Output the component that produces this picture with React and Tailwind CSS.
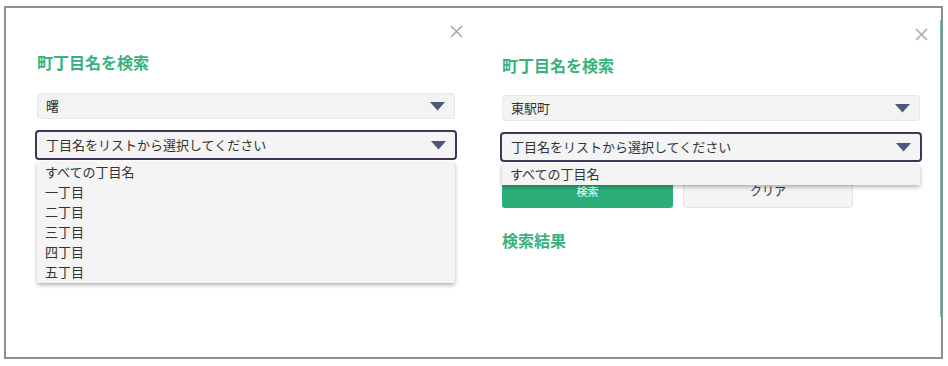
import React from "react";

const font = { fontFamily: '"Noto Sans CJK JP", "Noto Sans", sans-serif' };

function CloseX() {
  return (
    <svg width="13" height="13" viewBox="0 0 13 13" className="block">
      <path d="M1 1 L12 12 M12 1 L1 12" stroke="#a9a9a9" strokeWidth="1.6" fill="none" />
    </svg>
  );
}

function Arrow() {
  return (
    <svg width="15" height="9" viewBox="0 0 15 9" className="block shrink-0">
      <path d="M0 0 L15 0 L7.5 8.5 Z" fill="#4c577b" />
    </svg>
  );
}

function Panel({ town, items, topPad, headGap, selGap, showBelow }) {
  return (
    <div className="flex flex-col w-[418px]">
      <div className={`flex justify-end -mr-[8px] ${topPad}`}>
        <CloseX />
      </div>
      <div className={`${headGap} text-[16px] leading-[24px] font-bold text-[#37b27c]`}>町丁目名を検索</div>
      <div className={`${selGap} h-[26px] flex items-center justify-between pl-[8px] pr-[9px] bg-[#f3f3f3] border border-[#e7e7e7] rounded-[3px] text-[13px] text-[#333]`}>
        <span>{town}</span>
        <Arrow />
      </div>
      <div className="relative mt-[11px] -mx-[2px]">
        <div className="h-[30px] flex items-center justify-between pl-[9px] pr-[9px] bg-[#f4f4f4] border-2 border-[#3e3659] rounded-[4px] text-[13px] text-[#333]">
          <span>丁目名をリストから選択してください</span>
          <Arrow />
        </div>
        <div className="absolute left-[2px] right-[2px] top-full mt-[2px] z-10 bg-[#f4f4f4] shadow-[0_2px_4px_rgba(0,0,0,0.3)] pb-[1px]">
          {items.map((t) => (
            <div key={t} className="h-[20px] leading-[20px] pl-[8px] text-[13px] text-[#333]">{t}</div>
          ))}
        </div>
      </div>
      {showBelow && (
        <>
          <div className="mt-[14px] flex gap-[10px]">
            <div className="w-[171px] h-[32px] flex items-end justify-center pb-[9px] bg-[#2bae78] rounded-[3px] text-white text-[11px]">検索</div>
            <div className="w-[170px] h-[32px] flex items-end justify-center pb-[7px] bg-[#f4f4f4] border border-[#e2e2e2] rounded-[3px] text-[#333] text-[12px]">クリア</div>
          </div>
          <div className="mt-[20px] text-[16px] leading-[24px] font-bold text-[#37b27c]">検索結果</div>
        </>
      )}
    </div>
  );
}

export default function App() {
  return (
    <div className="w-[948px] h-[366px] bg-white pt-[6px] pl-[4px]" style={font}>
      <div className="w-[939px] h-[353px] border-2 border-[#8e8e8e] flex bg-white">
        <div className="w-[464px] pl-[31px]">
          <Panel
            town="曙"
            items={["すべての丁目名", "一丁目", "二丁目", "三丁目", "四丁目", "五丁目"]}
            topPad="pt-[17px]"
            headGap="mt-[12px]"
            selGap="mt-[19px]"
            showBelow={false}
          />
        </div>
        <div className="flex-1 flex pl-[32px]">
          <Panel
            town="東駅町"
            items={["すべての丁目名"]}
            topPad="pt-[20px]"
            headGap="mt-[12px]"
            selGap="mt-[18px]"
            showBelow={true}
          />
          <div className="flex-1" />
          <div className="w-[1px] mt-[12px] h-[297px] bg-[#6cc49b]" />
        </div>
      </div>
    </div>
  );
}
